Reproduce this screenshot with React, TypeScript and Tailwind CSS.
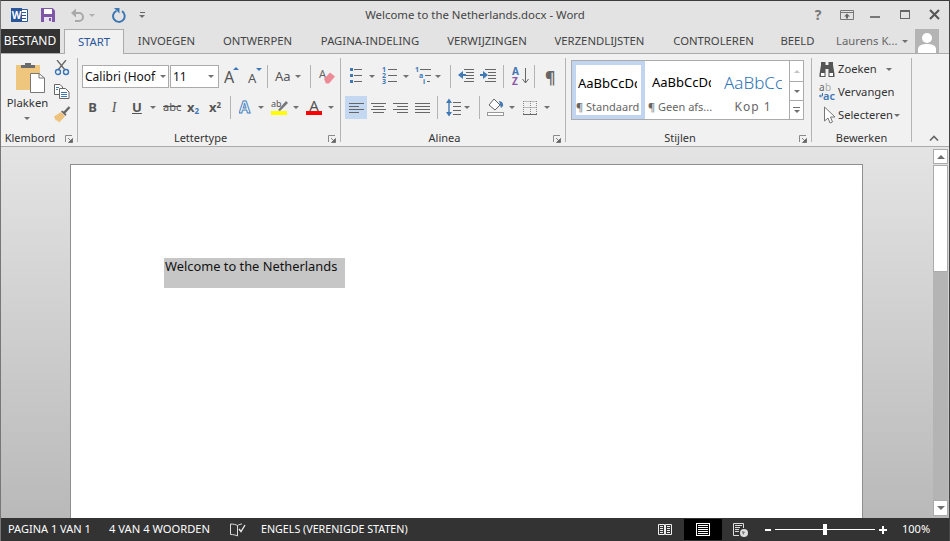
import type { ReactNode } from 'react';

const FONT = "font-['Noto_Sans','Open_Sans',sans-serif]";

const TABS = [
  { label: 'INVOEGEN', width: 'w-[85px]' },
  { label: 'ONTWERPEN', width: 'w-[97px]' },
  { label: 'PAGINA-INDELING', width: 'w-[128px]' },
  { label: 'VERWIJZINGEN', width: 'w-[106px]' },
  { label: 'VERZENDLIJSTEN', width: 'w-[119px]' },
  { label: 'CONTROLEREN', width: 'w-[109px]' },
  { label: 'BEELD', width: 'w-[59px]' },
];

// every ribbon icon is 23px high so coordinates line up with the row
function I({ w, className, children }: { w: number; className?: string; children: ReactNode }) {
  return (
    <svg width={w} height={23} viewBox={`0 0 ${w} 23`} className={`shrink-0 ${className ?? ''}`}>
      {children}
    </svg>
  );
}

function Tri({ className }: { className?: string }) {
  return <span className={`w-0 h-0 shrink-0 border-x-[3px] border-t-[3px] border-x-transparent border-t-[#707070] ${className ?? ''}`} />;
}

function Sep({ className }: { className?: string }) {
  return <span className={`w-px h-[23px] shrink-0 bg-[#b4b4b4] ${className ?? ''}`} />;
}

function Lines({ rows, color = '#666' }: { rows: [number, number, number][]; color?: string }) {
  return (
    <>
      {rows.map(([x, y, w], i) => (
        <rect key={i} x={x} y={y} width={w} height={1} fill={color} />
      ))}
    </>
  );
}

function Launcher() {
  return (
    <svg width={8} height={8} viewBox="0 0 8 8" className="shrink-0 mr-[4px] mt-[4px]">
      <path d="M0.5 7V0.5H7" fill="none" stroke="#8a8a8a" />
      <path d="M3 3L6 6M7.5 3.5V7.5H3.5Z" fill="#666" stroke="#666" strokeWidth={0.8} />
    </svg>
  );
}

function Group({ width, label, launcher, children }: { width: string; label: string; launcher?: boolean; children: ReactNode }) {
  return (
    <section className={`${width} h-[84px] mt-1 shrink-0 flex flex-col border-r border-[#b4b4b4]`}>
      <div className="flex-1 min-h-0">{children}</div>
      <div className="h-[11px] flex items-start text-[11px] leading-[14px] text-[#333]">
        <span className={`flex-1 text-center ${launcher ? 'pr-[5px]' : ''}`}>{label}</span>
        {launcher && <Launcher />}
      </div>
    </section>
  );
}

function TitleBar() {
  return (
    <div className="h-[29px] grid grid-cols-[1fr_auto_1fr] items-center">
      <div className="flex items-center pl-[11px] pt-px">
        <svg width={17} height={16} viewBox="0 0 17 16">
          <path d="M9 2.5H16.5V14.5H9Z" fill="#fff" stroke="#2b579a" />
          <path d="M11 5.5H15M11 8.5H15M11 11.5H15" stroke="#2b579a" />
          <rect x={0} y={1} width={11} height={14} fill="#2b579a" />
          <text x={5.5} y={12} textAnchor="middle" fontSize={10} fontWeight={700} fill="#fff">W</text>
        </svg>
        <svg width={14} height={14} viewBox="0 0 14 14" className="ml-[13px]">
          <path d="M0 0H11.5L14 2.5V14H0Z" fill="#7e57a6" />
          <rect x={3} y={1} width={8} height={5} fill="#fff" />
          <rect x={3} y={9} width={8} height={5} fill="#e7e0ef" />
          <rect x={8} y={10} width={2} height={3} fill="#7e57a6" />
        </svg>
        <svg width={14} height={14} viewBox="0 0 14 14" className="ml-[15px]">
          <path d="M2 5H9A4 4 0 0 1 9 13H5" fill="none" stroke="#a9a9a9" strokeWidth={2} />
          <path d="M6 0.5V9.5L1 5Z" fill="#a9a9a9" />
        </svg>
        <Tri className="ml-[5px] border-t-[#b0b0b0]" />
        <svg width={15} height={15} viewBox="0 0 15 15" className="ml-[16px]">
          <path d="M5.5 2.8A5.8 5.8 0 1 0 11 3.2" fill="none" stroke="#3d78b5" strokeWidth={2} />
          <path d="M3 0H8.5V5.5Z" fill="#3d78b5" />
        </svg>
        <span className="ml-[13px] flex flex-col items-center gap-[2px]">
          <span className="w-[5px] h-px bg-[#666]" />
          <Tri className="border-x-[3px] border-t-[#666]" />
        </span>
      </div>
      <div className="text-[11.4px] text-[#444] whitespace-nowrap pt-px">Welcome to the Netherlands.docx - Word</div>
      <div className="flex items-center justify-end">
        <span className="text-[14px] font-bold text-[#777] w-[8px] text-center mr-[18px]">?</span>
        <svg width={14} height={10} viewBox="0 0 14 10" className="mr-[16px]">
          <path d="M0.5 0.5H13.5V9.5H0.5ZM0.5 2.5H13.5" fill="none" stroke="#777" />
          <path d="M7 3.5L10 6.5H8V8.5H6V6.5H4Z" fill="#666" />
        </svg>
        <span className="w-[10px] h-[2px] bg-[#777] mt-[5px] mr-[20px]" />
        <span className="w-[10px] h-[9px] border border-t-2 border-[#666] mr-[19px]" />
        <svg width={11} height={11} viewBox="0 0 11 11" className="mr-[10px]">
          <path d="M1 1L10 10M10 1L1 10" stroke="#555" strokeWidth={2} />
        </svg>
      </div>
    </div>
  );
}

function TabRow() {
  return (
    <div className="h-[25px] flex border-b border-[#ababab] text-[11.3px] leading-[24px]">
      <div className="w-[60px] h-[24px] bg-[#333] text-white text-center text-[12px]">BESTAND</div>
      <div className="ml-1 w-[60px] h-[25px] bg-[#f1f1f1] border-x border-t border-[#ababab] text-[#2b579a] text-center z-10">START</div>
      {TABS.map((tab) => (
        <div key={tab.label} className={`${tab.width} text-center text-[#444] whitespace-nowrap`}>{tab.label}</div>
      ))}
      <div className="ml-[9px] w-[60px] text-[#666] whitespace-nowrap">Laurens K...</div>
      <Tri className="ml-[6px] mt-[11px]" />
      <div className="ml-[7px] w-[24px] h-[24px] bg-[#b4b4b4]">
        <svg width={24} height={24} viewBox="0 0 24 24">
          <circle cx={12} cy={9} r={5} fill="#fff" />
          <path d="M3 24V20C3 16 8 15 12 15S21 16 21 20V24Z" fill="#fff" />
        </svg>
      </div>
    </div>
  );
}

function Klembord() {
  return (
    <div className="flex">
      <div className="w-[54px] pt-[2px] flex flex-col items-center">
        <svg width={54} height={36} viewBox="0 0 54 36" className="shrink-0">
          <rect x={16} y={5} width={24} height={25} fill="#eec67d" />
          <path d="M21 8V5H25V3H31V5H35V8Z" fill="#6b6b6b" />
          <path d="M30.5 13.5H39L44.5 18V32.5H30.5Z" fill="#fff" stroke="#777" />
          <path d="M39 13.5V18H44.5" fill="none" stroke="#777" />
        </svg>
        <span className="h-[14px] text-[11.3px] leading-[14px] text-[#333] pl-px">Plakken</span>
        <Tri className="mt-[7px]" />
      </div>
      <div className="flex flex-col">
        <svg width={16} height={16} viewBox="0 0 16 16" className="mt-[2px]">
          <path d="M3 0L11 10M12 0L4 10" stroke="#666" strokeWidth={1.3} />
          <circle cx={4} cy={12} r={2.5} fill="none" stroke="#3a76b8" strokeWidth={1.4} />
          <circle cx={12} cy={12} r={2.5} fill="none" stroke="#3a76b8" strokeWidth={1.4} />
        </svg>
        <svg width={16} height={15} viewBox="0 0 16 15" className="mt-[8px]">
          <path d="M0.5 0.5H6L8.5 3V10.5H0.5Z" fill="#fff" stroke="#666" />
          <path d="M5.5 4.5H11.5L15 8V14.5H5.5Z" fill="#fff" stroke="#666" />
          <path d="M2 3.5H5M2 5.5H4M7 8.5H13M7 10.5H13M7 12.5H13" stroke="#3f78b5" />
        </svg>
        <svg width={17} height={17} viewBox="0 0 17 17" className="mt-[7px]">
          <path d="M10 7L15.5 1" stroke="#666" strokeWidth={2.4} />
          <path d="M0 10.5L7 6L11 10.5L5 16.5L3 14L2 15Z" fill="#eec27c" />
          <path d="M7 5.5L11.5 10L12.5 8.5L8.5 4.5Z" fill="#666" />
        </svg>
      </div>
    </div>
  );
}

function Lettertype() {
  return (
    <div className="text-[#555]">
      <div className="mt-[7px] h-[23px] flex items-center">
        <div className="ml-1 w-[87px] h-[23px] bg-white border border-[#ababab] flex items-center pl-[2px] text-[12px] text-[#111] overflow-hidden">
          <span className="w-[71px] shrink-0 overflow-hidden whitespace-nowrap">Calibri (Hoofd</span>
          <Tri className="ml-[4px]" />
        </div>
        <div className="ml-px w-[49px] h-[23px] bg-white border border-[#ababab] flex items-center pl-[2px] text-[12px] text-[#111]">
          <span className="flex-1">11</span>
          <Tri className="mr-[4px]" />
        </div>
        <I w={16} className="ml-[5px]">
          <text x={0} y={18} fontSize={16} fill="#555">A</text>
          <path d="M9 5L12 2L15 5Z" fill="#3f78b5" />
        </I>
        <I w={15} className="ml-[7px]">
          <text x={1} y={18} fontSize={13} fill="#555">A</text>
          <path d="M9 3H15L12 6Z" fill="#3f78b5" />
        </I>
        <Sep className="ml-[5px]" />
        <span className="ml-[7px] w-[17px] text-[13px] whitespace-nowrap">Aa</span>
        <Tri className="ml-[3px]" />
        <Sep className="ml-[9px]" />
        <I w={16} className="ml-[8px]">
          <text x={0} y={13} fontSize={11} fill="#666">A</text>
          <path d="M5 14L11 7.5L16 11.5L10 18.5H7Z" fill="#ec8b95" />
        </I>
      </div>
      <div className="mt-[8px] h-[23px] flex items-center">
        <span className="ml-[10px] w-[9px] text-[13px] font-bold text-center">B</span>
        <span className="ml-[13px] w-[8px] text-[14px] italic font-['Liberation_Serif',serif] text-center">I</span>
        <span className="ml-[14px] w-[9px] text-[13px] font-bold underline text-center">U</span>
        <Tri className="ml-[9px]" />
        <span className="ml-[7px] w-[17px] text-[11px] line-through whitespace-nowrap">abc</span>
        <span className="ml-[7px] w-[14px] whitespace-nowrap text-[13px] font-bold leading-none">x<sub className="text-[8px] text-[#3f78b5]">2</sub></span>
        <span className="ml-[8px] w-[13px] whitespace-nowrap text-[13px] font-bold leading-none">x<sup className="text-[8px] text-[#555]">2</sup></span>
        <Sep className="ml-[8px]" />
        <I w={14} className="ml-[8px]">
          <text x={0} y={17} fontSize={16} fontWeight={700} fill="#fff" stroke="#4a82bd" strokeWidth={1}>A</text>
        </I>
        <Tri className="ml-[5px]" />
        <I w={17} className="ml-[7px]">
          <text x={0} y={11} fontSize={9} fill="#555">ab</text>
          <path d="M7 14L15 5L17 7L9 15Z" fill="#777" />
          <rect x={0} y={15} width={16} height={4} fill="#ffff00" />
        </I>
        <Tri className="ml-[5px]" />
        <I w={17} className="ml-[7px]">
          <text x={8} y={15} textAnchor="middle" fontSize={15} fill="#555">A</text>
          <rect x={0} y={15} width={16} height={4} fill="#ff0000" />
        </I>
        <Tri className="ml-[5px]" />
      </div>
    </div>
  );
}

function Alinea() {
  return (
    <div>
      <div className="mt-[7px] h-[23px] flex items-center">
        <I w={14} className="ml-[8px]">
          <path d="M1 3H4V6H1ZM1 9H4V12H1ZM1 15H4V18H1Z" fill="#3f78b5" />
          <Lines rows={[[5, 4, 8], [5, 10, 8], [5, 16, 8]]} />
        </I>
        <Tri className="ml-[6px]" />
        <I w={15} className="ml-[7px]">
          <g fontSize={7} fontWeight={700} fill="#3f78b5">
            <text x={0} y={7}>1</text>
            <text x={0} y={13}>2</text>
            <text x={0} y={19}>3</text>
          </g>
          <Lines rows={[[6, 4, 9], [6, 10, 9], [6, 16, 9]]} />
        </I>
        <Tri className="ml-[6px]" />
        <I w={16} className="ml-[6px]">
          <g fontSize={7} fontWeight={700} fill="#3f78b5">
            <text x={0} y={7}>1</text>
            <text x={4} y={13}>a</text>
            <text x={8} y={19}>i</text>
          </g>
          <Lines rows={[[5, 4, 11], [10, 10, 6], [12, 16, 3]]} />
        </I>
        <Tri className="ml-[4px]" />
        <Sep className="ml-[9px]" />
        <I w={16} className="ml-[7px]">
          <Lines rows={[[6, 4, 10], [8, 7, 8], [8, 10, 8], [8, 13, 8], [6, 16, 10]]} />
          <path d="M0 10L5 6V9H8V11H5V14Z" fill="#3f78b5" />
        </I>
        <I w={16} className="ml-[6px]">
          <Lines rows={[[5, 4, 11], [8, 7, 8], [8, 10, 8], [8, 13, 8], [5, 16, 11]]} />
          <path d="M8 10L3 6V9H0V11H3V14Z" fill="#3f78b5" />
        </I>
        <Sep className="ml-[7px]" />
        <I w={17} className="ml-[8px]">
          <text x={0} y={10} fontSize={10} fontWeight={700} fill="#3f78b5">A</text>
          <text x={0} y={20} fontSize={10} fontWeight={700} fill="#8a55a8">Z</text>
          <path d="M13.5 3V17M10.5 14L13.5 18L16.5 14" fill="none" stroke="#666" />
        </I>
        <Sep className="ml-[5px]" />
        <span className="ml-[10px] w-[10px] text-[16px] font-bold text-[#666] text-center leading-none">¶</span>
      </div>
      <div className="mt-[8px] h-[23px] flex items-center">
        <I w={22} className="ml-[4px] bg-[#c5d8f1]">
          <Lines rows={[[4, 7, 15], [4, 10, 10], [4, 13, 15], [4, 16, 10]]} />
        </I>
        <I w={15} className="ml-[4px]">
          <Lines rows={[[0, 7, 15], [2, 10, 11], [0, 13, 15], [2, 16, 11]]} />
        </I>
        <I w={15} className="ml-[7px]">
          <Lines rows={[[0, 7, 15], [4, 10, 11], [0, 13, 15], [4, 16, 11]]} />
        </I>
        <I w={15} className="ml-[7px]">
          <Lines rows={[[0, 7, 15], [0, 10, 15], [0, 13, 15], [0, 16, 15]]} />
        </I>
        <Sep className="ml-[7px]" />
        <I w={15} className="ml-[8px]">
          <path d="M3 5V18" stroke="#3f78b5" strokeWidth={1.4} />
          <path d="M0 7L3 2.5L6 7ZM0 16L3 20.5L6 16Z" fill="#3f78b5" />
          <Lines rows={[[7, 6, 8], [7, 10, 8], [7, 14, 8], [7, 18, 8]]} />
        </I>
        <Tri className="ml-[3px]" />
        <Sep className="ml-[9px]" />
        <I w={17} className="ml-[7px]">
          <path d="M7 3L13 9L8 14L2 9Z" fill="#fff" stroke="#666" />
          <path d="M12 5A4 4 0 0 1 16 10L14 12Z" fill="#3f78b5" />
          <rect x={0.5} y={16.5} width={16} height={3} fill="#fff" stroke="#999" />
        </I>
        <Tri className="ml-[5px]" />
        <I w={14} className="ml-[8px]">
          <path d="M0.5 5.5H13.5M0.5 11.5H13.5M7.5 5V18M0.5 5V18M13.5 5V18" stroke="#888" strokeDasharray="1 1" fill="none" />
          <rect x={0} y={18} width={14} height={1} fill="#666" />
        </I>
        <Tri className="ml-[7px]" />
      </div>
    </div>
  );
}

function GalleryItem({ sample, label, sampleClass, labelClass, outerClass }: { sample: string; label: string; sampleClass: string; labelClass: string; outerClass: string }) {
  return (
    <div className={`shrink-0 flex flex-col h-full ${outerClass}`}>
      <div className={`h-[32px] flex items-center overflow-hidden whitespace-nowrap ${sampleClass}`}>{sample}</div>
      <div className={`text-[11px] leading-[16px] whitespace-nowrap text-[#666] ${labelClass}`}>{label}</div>
    </div>
  );
}

function Stijlen() {
  return (
    <div className="ml-[5px] mt-[2px] w-[233px] h-[60px] bg-white border border-[#ababab] flex">
      <GalleryItem
        outerClass="w-[73px] border-[4px] border-[#c1d5f0] pt-[3px]"
        sampleClass="w-[59px] ml-[2px] text-[13px] text-black"
        labelClass="text-center pr-[2px]"
        sample="AaBbCcDd"
        label="¶ Standaard"
      />
      <GalleryItem
        outerClass="w-[72px] pt-[6px]"
        sampleClass="w-[59px] ml-[7px] text-[13px] text-black"
        labelClass="pl-[3px]"
        sample="AaBbCcDd"
        label="¶ Geen afs..."
      />
      <GalleryItem
        outerClass="w-[72px] pt-[6px]"
        sampleClass="w-[58px] ml-[7px] text-[17px] font-light text-[#2e74b5]"
        labelClass="text-center text-[12px] tracking-[1px]"
        sample="AaBbCcDd"
        label="Kop 1"
      />
      <div className="ml-auto w-[15px] border-l border-[#ababab] flex flex-col">
        <div className="h-[21px] border-b border-[#ababab] flex items-center justify-center">
          <Tri className="rotate-180 border-t-[#c4c4c4]" />
        </div>
        <div className="h-[19px] border-b border-[#ababab] flex items-center justify-center"><Tri /></div>
        <div className="flex-1 flex flex-col items-center justify-center gap-[2px]">
          <span className="w-[7px] h-px bg-[#707070]" />
          <Tri />
        </div>
      </div>
    </div>
  );
}

function Bewerken() {
  return (
    <div className="text-[11.2px] text-[#333]">
      <div className="h-[23px] flex items-center pl-[7px]">
        <I w={16}>
          <path d="M2 4H6.5V7H9.5V4H14V7L15.5 16V19H9.5V11H6.5V19H0.5V16L2 7Z" fill="#555" />
          <path d="M2 15H5.5V18H2ZM10.5 15H14V18H10.5Z" fill="#fff" />
        </I>
        <span className="ml-[3px] w-[39px] whitespace-nowrap">Zoeken</span>
        <Tri className="ml-[9px]" />
      </div>
      <div className="h-[23px] flex items-center pl-[7px]">
        <I w={16}>
          <text x={0} y={10} fontSize={10} fill="#666">a</text>
          <text x={6} y={10} fontSize={10} fill="#aaa">b</text>
          <text x={4} y={19} fontSize={11} fontWeight={600} fill="#3f78b5">ac</text>
          <path d="M3.5 12V15H0.5M2 13.5L0.5 15L2 16.5" fill="none" stroke="#3f78b5" />
        </I>
        <span className="ml-[3px] whitespace-nowrap">Vervangen</span>
      </div>
      <div className="h-[23px] flex items-center pl-[11px]">
        <I w={12}>
          <path d="M1.5 3V17L5 14L7 19L9.5 18L7.5 13H12Z" fill="#fff" stroke="#777" />
        </I>
        <span className="ml-[3px] w-[54px] whitespace-nowrap">Selecteren</span>
        <Tri className="ml-[2px]" />
      </div>
    </div>
  );
}

function Ribbon() {
  return (
    <div className="h-[93px] flex bg-[#f1f1f1] border-b border-[#ababab] shrink-0">
      <Group width="w-[78px]" label="Klembord" launcher><Klembord /></Group>
      <Group width="w-[263px]" label="Lettertype" launcher><Lettertype /></Group>
      <Group width="w-[225px]" label="Alinea" launcher><Alinea /></Group>
      <Group width="w-[246px]" label="Stijlen" launcher><Stijlen /></Group>
      <Group width="w-[100px]" label="Bewerken"><Bewerken /></Group>
      <div className="flex-1 flex justify-end items-end pb-[5px] pr-[11px]">
        <svg width={10} height={6} viewBox="0 0 10 6">
          <path d="M1 5.5L5 1.5L9 5.5" fill="none" stroke="#666" strokeWidth={1.6} />
        </svg>
      </div>
    </div>
  );
}

function Scrollbar() {
  return (
    <div className="ml-[70px] mt-[2px] w-[15px] flex flex-col">
      <div className="h-[15px] bg-white border border-[#ababab] flex items-center justify-center shrink-0">
        <Tri className="rotate-180 border-x-[4px] border-t-[4px]" />
      </div>
      <div className="flex-1 mt-px bg-[#b4b4b4] flex flex-col">
        <div className="h-[107px] bg-white border border-[#ababab]" />
      </div>
      <div className="h-[16px] mb-[2px] bg-white border border-[#ababab] flex items-center justify-center shrink-0">
        <Tri className="border-x-[4px] border-t-[4px]" />
      </div>
    </div>
  );
}

function StatusBar() {
  return (
    <div className="h-[23px] shrink-0 bg-[#333] text-white text-[11px] flex items-center whitespace-nowrap">
      <span className="ml-[8px] w-[81px]">PAGINA 1 VAN 1</span>
      <span className="ml-[20px] w-[101px] text-[11.2px]">4 VAN 4 WOORDEN</span>
      <svg width={16} height={14} viewBox="0 0 16 14" className="ml-[20px]">
        <path d="M7.5 2.5C6 1.5 3 1 0.5 1V11.5C3 11.5 6 12 7.5 13V2.5C9 1.5 11 1 12 1" fill="none" stroke="#ddd" />
        <path d="M9 6L11 8.5L15 2" fill="none" stroke="#eee" strokeWidth={1.3} />
      </svg>
      <span className="ml-[15px] w-[147px] text-[10.7px]">ENGELS (VERENIGDE STATEN)</span>
      <svg width={14} height={13} viewBox="0 0 14 13" className="ml-[250px]">
        <path d="M0.5 1.5H6.5V11.5H0.5ZM7.5 1.5H13.5V11.5H7.5Z" fill="#333" stroke="#eee" />
        <path d="M2 3.5H5M2 5.5H5M2 7.5H5M2 9.5H5M9 3.5H12M9 5.5H12M9 7.5H12M9 9.5H12" stroke="#eee" />
      </svg>
      <div className="ml-[12px] w-[38px] h-[21px] bg-black flex items-center justify-center">
        <svg width={14} height={13} viewBox="0 0 14 13">
          <rect x={0.5} y={0.5} width={13} height={12} fill="none" stroke="#fff" />
          <path d="M2 2.5H12M2 4.5H12M2 6.5H12M2 8.5H12M2 10.5H12" stroke="#fff" />
        </svg>
      </div>
      <svg width={15} height={14} viewBox="0 0 15 14" className="ml-[11px]">
        <path d="M0.5 0.5H10.5V5M0.5 0.5V12.5H6" fill="none" stroke="#ddd" />
        <path d="M2 2.5H9M2 4.5H7M2 6.5H6M2 8.5H6" stroke="#ddd" />
        <circle cx={11} cy={10} r={4} fill="#ddd" />
        <path d="M9 8L12 9L10 12Z" fill="#777" />
      </svg>
      <span className="ml-[17px] w-[6px] h-[2px] bg-white" />
      <span className="ml-[4px] w-[100px] h-px bg-white flex items-center justify-center">
        <span className="w-[4px] h-[11px] bg-white" />
      </span>
      <svg width={8} height={8} viewBox="0 0 8 8" className="ml-[4px]">
        <path d="M4 0V8M0 4H8" stroke="#fff" strokeWidth={2} />
      </svg>
      <span className="ml-[15px]">100%</span>
    </div>
  );
}

export default function App() {
  return (
    <div className={`relative w-[950px] h-[541px] overflow-hidden flex flex-col bg-[#e3e3e3] ${FONT}`}>
      <TitleBar />
      <TabRow />
      <Ribbon />
      <div className="flex-1 min-h-0 flex bg-linear-to-b from-[#e4e4e4] to-[#b9b9b9]">
        <div className="ml-[70px] mt-[17px] w-[793px] bg-white border-x border-t border-[#8f8f8f] pl-[93px] pt-[93px] shrink-0">
          <div className="w-[181px] h-[30px] bg-[#c6c6c6] text-[12.85px] leading-[17px] text-[#111] whitespace-nowrap pl-px">
            Welcome to the Netherlands
          </div>
        </div>
        <Scrollbar />
      </div>
      <StatusBar />
      <div className="absolute inset-0 pointer-events-none border-t border-r border-l border-t-[#3c3c3c] border-r-[#444] border-l-[#777]" />
    </div>
  );
}
